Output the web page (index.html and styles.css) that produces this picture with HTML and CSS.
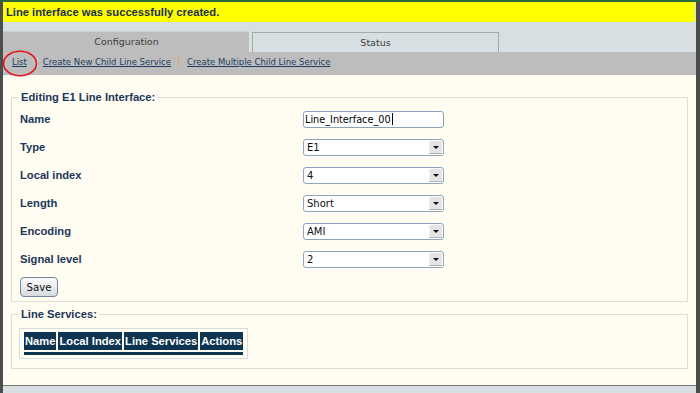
FILE: index.html
```html
<!DOCTYPE html>
<html>
<head>
<meta charset="utf-8">
<title>Line Interface</title>
<link rel="stylesheet" href="styles.css">
</head>
<body>
<div class="page">
  <div class="notice">Line interface was successfully created.</div>
  <div class="tabs">
    <div class="tab active">Configuration</div>
    <div class="tab">Status</div>
  </div>
  <div class="subnav">
    <a class="link" href="#">List</a><span class="sep sep-first"></span><a class="link" href="#">Create New Child Line Service</a><span class="sep sep-second"></span><a class="link" href="#">Create Multiple Child Line Service</a>
    <svg class="mark" width="36" height="28" viewBox="0 0 36 28"><ellipse cx="18" cy="13.5" rx="16.5" ry="12.3" fill="none" stroke="#e3141a" stroke-width="1.6"/></svg>
  </div>
  <div class="content">
    <fieldset class="box edit">
      <legend>Editing E1 Line Interface:</legend>
      <div class="form">
        <div class="label">Name</div>
        <div class="textbox">Line_Interface_00<span class="caret"></span></div>
        <div class="label">Type</div>
        <div class="select"><span>E1</span><span class="arrow"></span></div>
        <div class="label">Local index</div>
        <div class="select"><span>4</span><span class="arrow"></span></div>
        <div class="label">Length</div>
        <div class="select"><span>Short</span><span class="arrow"></span></div>
        <div class="label">Encoding</div>
        <div class="select"><span>AMI</span><span class="arrow"></span></div>
        <div class="label">Signal level</div>
        <div class="select"><span>2</span><span class="arrow"></span></div>
      </div>
      <div class="actions"><button class="btn" type="button">Save</button></div>
    </fieldset>
    <fieldset class="box services">
      <legend>Line Services:</legend>
      <div class="svc-wrap">
        <table class="svc">
          <thead>
            <tr><th>Name</th><th>Local Index</th><th>Line Services</th><th>Actions</th></tr>
          </thead>
          <tbody>
            <tr><td class="bar" colspan="4"></td></tr>
          </tbody>
        </table>
      </div>
    </fieldset>
  </div>
  <div class="footer"></div>
</div>
</body>
</html>
```

FILE: styles.css
```css
html, body {
  margin: 0;
  padding: 0;
  background: #4b4f4c;
}
body {
  border-top: 2px solid #2c6a3b;
  height: 391px;
  overflow: hidden;
  font-family: "Liberation Sans", Arial, sans-serif;
}
.page {
  margin: 0 4px 0 3px;
  height: 391px;
  background: #d8dfe3;
}
.notice {
  height: 20px;
  line-height: 20px;
  margin-right: 1px;
  padding-left: 3px;
  background: #ffff00;
  color: #1a3050;
  font-weight: bold;
  font-size: 11.2px;
}
.tabs {
  height: 30px;
  display: flex;
  align-items: flex-end;
  gap: 2px;
}
.tab {
  box-sizing: border-box;
  width: 247px;
  height: 20px;
  line-height: 19px;
  text-align: center;
  font-family: "DejaVu Sans", sans-serif;
  font-size: 9.5px;
  color: #3c3c3c;
  background: #d8dfe3;
  border: 1px solid #a9a9a9;
  border-bottom: none;
}
.tab.active {
  height: 21px;
  line-height: 20px;
  background: #bdbdbd;
  border-color: #cfcfcf #e4e4e4 transparent #bdbdbd;
}
.subnav {
  position: relative;
  box-sizing: border-box;
  height: 23px;
  padding: 4px 0 0 9px;
  line-height: 12px;
  background: #bdbdbd;
  font-family: "DejaVu Sans", sans-serif;
  font-size: 8.5px;
  display: flex;
  align-items: flex-start;
}
.link {
  color: #1e3c5e;
  text-decoration: underline;
}
.sep {
  display: inline-block;
  width: 1px;
  height: 10px;
  margin-top: 1px;
}
.sep-first {
  background: #ddd6c8;
  margin-left: 10px;
  margin-right: 5px;
}
.sep-second {
  background: #e3a45e;
  margin-left: 7px;
  margin-right: 8px;
}
.mark {
  position: absolute;
  left: -1px;
  top: -2px;
}
.content {
  box-sizing: border-box;
  height: 311px;
  padding: 15px 8px 0 8px;
  background: #fffcf2;
  border-bottom: 1px solid #767a78;
}
.box {
  margin: 0;
  min-width: 0;
  border: 1px solid #deddd6;
  padding: 1px 7px 4px 7px;
}
.box legend {
  padding: 0 2px;
  font-weight: bold;
  font-size: 11.2px;
  line-height: 14px;
  color: #1c3759;
}
.services {
  margin-top: 5px;
  padding-top: 7px;
  padding-bottom: 5px;
}
.form {
  display: grid;
  grid-template-columns: 284px 141px;
  grid-auto-rows: 28px;
  align-items: center;
}
.label {
  padding-left: 1px;
  font-weight: bold;
  font-size: 11.2px;
  color: #1c3759;
}
.textbox {
  box-sizing: border-box;
  width: 141px;
  height: 17px;
  padding-left: 1px;
  border: 1px solid #8aa2ba;
  border-radius: 3px;
  background: #fff;
  font-family: "DejaVu Sans", sans-serif;
  font-size: 9.7px;
  line-height: 15px;
  color: #000;
  white-space: nowrap;
}
.caret {
  display: inline-block;
  width: 1px;
  height: 12px;
  background: #000;
  vertical-align: -2px;
  margin-left: 1px;
}
.select {
  box-sizing: border-box;
  width: 141px;
  height: 17px;
  padding-left: 3px;
  display: flex;
  align-items: center;
  justify-content: space-between;
  border: 1px solid #8ea6bd;
  border-radius: 3px;
  background: #fff;
  font-family: "DejaVu Sans", sans-serif;
  font-size: 10px;
  color: #111;
}
.arrow {
  position: relative;
  box-sizing: border-box;
  width: 13px;
  height: 13px;
  margin-right: 1px;
  background: #e4e4e4;
  border-left: 1px solid #f2f2f2;
  border-bottom: 1px solid #b2b2b2;
}
.arrow::after {
  content: "";
  position: absolute;
  left: 3px;
  top: 5px;
  border-left: 3px solid transparent;
  border-right: 3px solid transparent;
  border-top: 3px solid #111;
}
.actions {
  padding-top: 4px;
}
.btn {
  box-sizing: border-box;
  width: 38px;
  height: 20px;
  margin: 0 0 0 1px;
  padding: 0;
  border: 1px solid #72869a;
  border-radius: 4px;
  background: linear-gradient(#fbfbfb, #d8dbde);
  font-family: "DejaVu Sans", sans-serif;
  font-size: 10.2px;
  color: #111;
  display: block;
}
.svc-wrap {
  display: inline-block;
  border: 1px solid #d6dce0;
  padding: 1px 2px;
}
.svc {
  border-collapse: separate;
  border-spacing: 2px;
}
.svc th {
  height: 18px;
  padding: 0 1px;
  line-height: 18px;
  text-align: left;
  background: #0d3551;
  color: #fff;
  font-weight: bold;
  font-size: 11.2px;
  white-space: nowrap;
}
.svc td.bar {
  height: 3px;
  padding: 0;
  background: #0d3551;
}
.footer {
  height: 8px;
}
```
